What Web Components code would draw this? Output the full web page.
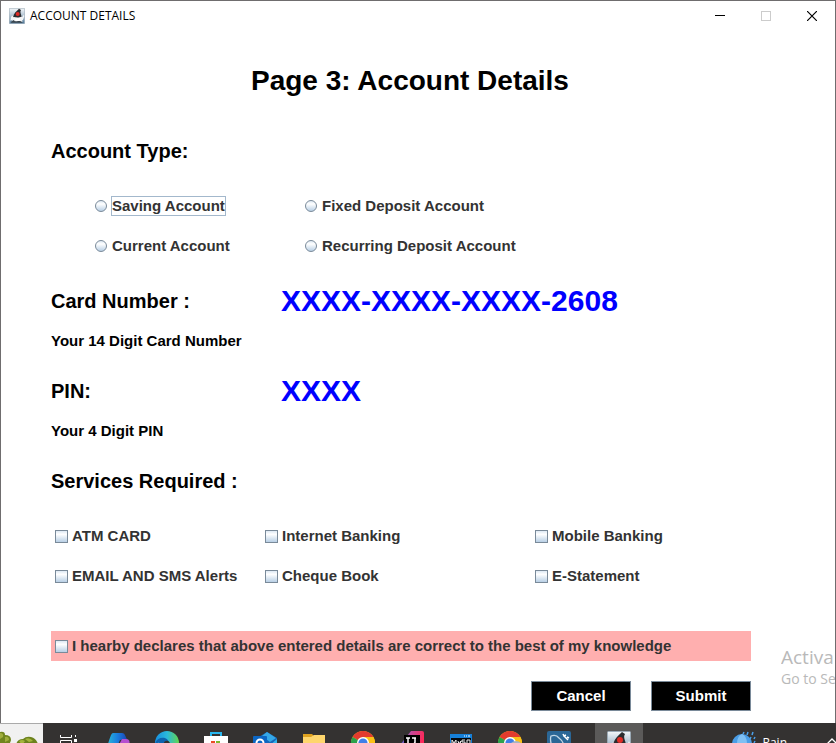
<!DOCTYPE html>
<html lang="en">
<head>
<meta charset="utf-8">
<title>ACCOUNT DETAILS</title>
<style>
  html, body { margin: 0; height: 100%; overflow: hidden; background: #fff; }
  body { font-family: "Liberation Sans", Arial, sans-serif; color: #000; }
</style>
</head>
<body>
<desktop-screen>
  <app-window heading="ACCOUNT DETAILS">
    <account-form></account-form>
  </app-window>
  <activation-note slot="note"></activation-note>
  <task-bar slot="bar"></task-bar>
</desktop-screen>

<script>
const define = (name, html, setup) => {
  const template = document.createElement('template');
  template.innerHTML = html;
  customElements.define(name, class extends HTMLElement {
    connectedCallback() {
      if (this.shadowRoot) return;
      const root = this.attachShadow({ mode: 'open' });
      root.append(template.content.cloneNode(true));
      if (setup) setup(this, root);
    }
  });
};

define('java-icon', `
<style>
  :host { display: block; width: 16px; height: 16px; }
  svg { display: block; width: 100%; height: 100%; }
</style>
<svg viewBox="0 0 24 24" aria-hidden="true">
  <defs><linearGradient id="g" x2="0" y2="1"><stop stop-color="#f4f7f9"/><stop offset=".45" stop-color="#b3c5d4"/><stop offset="1" stop-color="#4f7797"/></linearGradient></defs>
  <rect x=".5" y=".5" width="23" height="23" rx="1" fill="url(#g)" stroke="#9aa9b5"/>
  <path d="M3 13l4-2 2 3-4 4-3 1zM18 11l2 3 2-4 1 2-2 6h-3z" fill="#f4f5f6"/>
  <path d="M7 12l11 1c2 2 2 5 2 8H5c0-4 0-6 2-9z" fill="#f4f5f6"/>
  <path d="M15 1l3 2c-2 3 0 6 1 10-3 0-5 2-8 1-2 0-3-1-5 0 1-6 5-9 9-13z" fill="#2a2c2f"/>
  <circle cx="13" cy="9" r="3" fill="#e02b26"/>
  <path d="M3 21l4-3 2 2 7-1 4 2v1H3z" fill="#39454e"/>
  <path d="M9 16l7-1 1 4-6 1z" fill="#fff"/>
</svg>`);

define('desktop-screen', `
<style>
  :host { display: flex; flex-direction: column; position: relative; height: 100%; overflow: hidden; }
  main { flex: 1 0 auto; display: flex; flex-direction: column; }
</style>
<main><slot></slot></main>
<slot name="bar"></slot>
<slot name="note"></slot>`);

define('app-window', `
<style>
  :host { display: flex; flex-direction: column; flex: 1; background: #fff; border: solid #6f6d6e; border-width: 1px 1px 0; }
  header { display: flex; align-items: center; height: 30px; padding-left: 8px; gap: 5px; }
  h1 { margin: 0; flex: 1; font: 400 12px/16px "Open Sans", "Noto Sans", sans-serif; }
  nav { display: flex; }
  button { all: unset; box-sizing: border-box; display: grid; place-items: center; width: 46px; height: 30px; }
  svg { display: block; width: 10px; height: 10px; fill: none; stroke: #000; }
  .off svg { stroke: #ccc; }
</style>
<header>
  <java-icon></java-icon>
  <h1></h1>
  <nav>
    <button aria-label="Minimize"><svg viewBox="0 0 10 10"><path d="M0 4.500h10"/></svg></button>
    <button class="off" aria-label="Maximize" disabled><svg viewBox="0 0 10 10"><rect x=".5" y=".5" width="9" height="9"/></svg></button>
    <button aria-label="Close"><svg viewBox="0 0 10 10"><path d="M0 0l10 10M10 0L0 10" stroke-width="1.200"/></svg></button>
  </nav>
</header>
<slot></slot>`, (el, root) => {
  root.querySelector('h1').textContent = el.getAttribute('heading');
});

define('detail-row', `
<style>
  :host { display: grid; grid-template-columns: 230px 1fr; align-items: center; }
  h3 { margin: 0; font-size: 20px; line-height: 40px; white-space: nowrap; }
  output { font-weight: 700; font-size: 30px; line-height: 40px; color: #00f; white-space: nowrap; }
  p { grid-column: 1 / -1; margin: 0; font-weight: 700; font-size: 15px; line-height: 40px; }
  p:empty { display: none; }
</style>
<h3 id="label"></h3><output aria-labelledby="label"></output><p></p>`, (el, root) => {
  root.querySelector('h3').textContent = el.getAttribute('label');
  root.querySelector('output').textContent = el.getAttribute('value') || '';
  root.querySelector('p').textContent = el.getAttribute('hint') || '';
});

define('choice-group', `
<style>
  :host { display: block; }
  fieldset { border: 0; margin: 0; padding: 0 0 0 4px; min-width: 0; display: grid; grid-template-columns: var(--columns, 1fr); }
  label { display: flex; align-items: center; gap: 3px; height: var(--row, 40px); font-weight: 700; font-size: 15px; line-height: 18px; color: #333; white-space: nowrap; }
  label:has([type=radio]) { gap: 4px; }
  input { appearance: none; flex: none; box-sizing: border-box; margin: 0; width: 13px; height: 13px; border: 1px solid #7a8a99;
    background: linear-gradient(#dde8f3, #fff 30%, #b8cfe5); outline: none; }
  input[type=radio] { width: 12px; height: 12px; border-radius: 50%; }
  input:checked { box-shadow: inset 0 0 0 3px #e4edf6, inset 0 0 0 6px #333; }
  span { border: 1px solid transparent; }
  .current span, input:focus-visible + span { border-color: #a3b8cc; }
</style>
<fieldset></fieldset>`, (el, root) => {
  const set = root.querySelector('fieldset');
  const kind = el.getAttribute('kind') || 'checkbox';
  set.setAttribute('aria-label', el.getAttribute('label'));
  el.getAttribute('options').split('|').forEach((text, i) => {
    const label = document.createElement('label');
    const input = document.createElement('input');
    const span = document.createElement('span');
    input.type = kind;
    input.name = 'choice';
    input.value = span.textContent = text;
    if (kind === 'radio' && i === 0) label.className = 'current';
    label.append(input, span);
    set.append(label);
  });
});

define('push-button', `
<style>
  :host { display: block; }
  button { box-sizing: border-box; width: 100px; height: 30px; padding: 0; border: 1px solid #7a8a99; border-radius: 0; background: #000; color: #fff; font: 700 15px/18px "Liberation Sans", Arial, sans-serif; }
</style>
<button type="button"><slot></slot></button>`);

define('account-form', `
<style>
  :host { display: block; padding: 30px 84px 12px 50px; }
  h2 { margin: 0 0 30px; padding-left: 200px; font-size: 28px; line-height: 40px; white-space: nowrap; }
  .types { --columns: 210px 1fr; margin: 15px 0 15px 40px; }
  .services { --columns: 210px 270px 1fr; margin: 15px 0 35px; }
  .gap { margin-bottom: 10px; }
  .declare { --row: 30px; background: #ffafaf; }
  footer { display: flex; justify-content: flex-end; gap: 20px; margin-top: 20px; }
</style>
<h2>Page 3: Account Details</h2>
<detail-row label="Account Type:"></detail-row>
<choice-group class="types" kind="radio" label="Account Type" options="Saving Account|Fixed Deposit Account|Current Account|Recurring Deposit Account"></choice-group>
<detail-row class="gap" label="Card Number :" value="XXXX-XXXX-XXXX-2608" hint="Your 14 Digit Card Number"></detail-row>
<detail-row class="gap" label="PIN:" value="XXXX" hint="Your 4 Digit PIN"></detail-row>
<detail-row label="Services Required :"></detail-row>
<choice-group class="services" label="Services Required" options="ATM CARD|Internet Banking|Mobile Banking|EMAIL AND SMS Alerts|Cheque Book|E-Statement"></choice-group>
<choice-group class="declare" label="Declaration" options="I hearby declares that above entered details are correct to the best of my knowledge"></choice-group>
<footer><push-button>Cancel</push-button><push-button>Submit</push-button></footer>`);

define('activation-note', `
<style>
  :host { position: absolute; right: 1px; top: 645px; width: 54px; overflow: hidden; white-space: nowrap; color: #b9b9b9; font-family: "Open Sans", "Noto Sans", sans-serif; }
  p { margin: 0; font-size: 19px; line-height: 24px; }
  small { display: block; font-size: 14px; line-height: 20px; }
</style>
<p>Activa</p><small>Go to Se</small>`);

const chrome = `
  <circle cx="12" cy="12" r="12" fill="#fbc116"/>
  <path d="M12 12L1.600 6A12 12 0 0 1 22.400 6z" fill="#e33b2e"/>
  <path d="M12 12L1.600 6A12 12 0 0 0 12 24z" fill="#2ba24c"/>
  <path d="M12 6h10.400A12 12 0 0 1 12 24z" fill="#fbc116"/>
  <circle cx="12" cy="12" r="6" fill="#fff"/><circle cx="12" cy="12" r="4.600" fill="#3f7fe8"/>`;

define('task-bar', `
<style>
  :host { display: flex; flex: none; height: 40px; margin-bottom: -20px; background: #343231; color: #fff; }
  .scene { width: 43px; background: #f1f1f1; border-top: 1px solid #aaa; box-sizing: border-box; overflow: hidden; margin-right: 1px; }
  .scene svg { display: block; width: 43px; height: 39px; }
  button { all: unset; display: grid; place-items: center; width: 49px; height: 40px; }
  button > svg, button java-icon { display: block; width: 24px; height: 24px; }
  .active { margin-left: 12px; width: 48px; background: #5b5a59; }
  .weather { margin-left: auto; width: auto; display: flex; align-items: center; gap: 7px; font: 400 12px/16px "Open Sans", "Noto Sans", sans-serif; }
  .more { width: 24px; margin-left: 33px; margin-right: -8px; }
  .more svg { width: 10px; height: 10px; }
</style>
<div class="scene"><svg viewBox="0 0 43 39">
  <path d="M0 8q5-1 5 3 6 0 6 5-2 8-11 14z" fill="#70851e"/><path d="M0 9q4 0 3 4l-3 2zM5 13q4-1 4 3l-4 2z" fill="#a0ae3d"/>
  <path d="M16 21q1-6 7-6 3-3 8-2 5 1 7 7 2 6-2 12H18z" fill="#6c821d"/><path d="M19 17q3-2 6 0l-3 4zm6-2q5-2 8 2l-4 1z" fill="#a4b53c"/>
</svg></div>
<button aria-label="Task View"><svg viewBox="0 0 24 24" fill="none" stroke="#fff"><path d="M3.500 4v2.500h11V4M3.500 18V9.500h11V18zM18.500 4v2M18.500 12v8"/><path d="M17 8h3v3h-3z" fill="#fff" stroke="none"/></svg></button>
<button aria-label="Copilot"><svg viewBox="0 0 24 24"><defs><linearGradient id="c"><stop stop-color="#28b7d7"/><stop offset=".5" stop-color="#1a7fe0"/><stop offset="1" stop-color="#1b45b4"/></linearGradient></defs><path d="M7 2h9c3 0 3 3 5 6l-7 1-5 11H3C0 18 2 12 5 4q1-2 2-2z" fill="url(#c)"/><path d="M16 8h4c4 0 4 3 3 7-2 6-3 8-7 8H8z" fill="#b64fd0"/></svg></button>
<button aria-label="Edge"><svg viewBox="0 0 24 24"><defs><linearGradient id="e"><stop stop-color="#168ee0"/><stop offset=".5" stop-color="#2ab9dc"/><stop offset="1" stop-color="#62d64e"/></linearGradient></defs><circle cx="12" cy="12" r="12" fill="url(#e)"/><path d="M0 13c2-8 13-8 14-1 0 2-3 3 0 5-6 4-11-1-10-6-4 3-3 9 1 12A12 12 0 0 1 0 13z" fill="#0e63ae"/><path d="M9 11q4-3 6 1l-2 4-4-1z" fill="#343231"/></svg></button>
<button aria-label="Store"><svg viewBox="0 0 24 24"><path d="M7 6V2h10v4" fill="none" stroke="#28b6ee" stroke-width="2"/><path d="M0 5h24v16q0 2-2 2H2q-2 0-2-2z" fill="#fff"/><path d="M7 10h4v4H7z" fill="#eb4b25"/><path d="M12 10h4v4h-4z" fill="#7cb82f"/><path d="M7 15h4v4H7z" fill="#20a4e8"/><path d="M12 15h4v4h-4z" fill="#fbb716"/></svg></button>
<button aria-label="Outlook"><svg viewBox="0 0 24 24"><path d="M4 7l10-6 10 6v15H4z" fill="#1768b9"/><path d="M9 5l5-4 9 6-6 4z" fill="#35a8e7"/><path d="M24 8v14H8z" fill="#32b4ed"/><rect y="5" width="14" height="14" rx="1" fill="#0c66c3"/><circle cx="7" cy="12" r="3.500" fill="none" stroke="#fff" stroke-width="2"/></svg></button>
<button aria-label="File Explorer"><svg viewBox="0 0 24 24"><path d="M1 3h9l2 2h10v16H1z" fill="#dfa21f"/><path d="M1 6h8l3-2h11v17H1z" fill="#fed66d"/></svg></button>
<button aria-label="Chrome"><svg viewBox="0 0 24 24">${chrome}</svg></button>
<button aria-label="IntelliJ IDEA"><svg viewBox="0 0 24 24"><defs><linearGradient id="i" y2=".3"><stop stop-color="#087cfa"/><stop offset=".45" stop-color="#c44a9b"/><stop offset="1" stop-color="#fe2857"/></linearGradient></defs><path d="M0 14L11 0h11q2 0 2 2v20H3z" fill="url(#i)"/><path d="M4 4h16v16H4z" fill="#000"/><path d="M6 7h4M8 7v6M6 13h4M12 7h4M15 7v4q0 2-3 2" fill="none" stroke="#fff" stroke-width="1.500"/></svg></button>
<button aria-label="MySQL Command Line"><svg viewBox="0 0 24 24"><path d="M1 3h22v19H1z" fill="#1680d8"/><path d="M2 7h20v14H2z" fill="#05080c"/><path d="M15 5h1m1 0h1m1 0h2" stroke="#fff"/><path d="M3 14V9l2 3 2-3v5M9 10l1 3 2-3-2 5M16 9h-3v2h3v3h-3M18 9h3v4h-3zM20 13l2 2" fill="none" stroke="#eee"/></svg></button>
<button aria-label="Chrome, second profile"><svg viewBox="0 0 24 24">${chrome}<circle cx="18" cy="17" r="7" fill="#a7b5c1"/></svg></button>
<button aria-label="MySQL Workbench"><svg viewBox="0 0 24 24"><rect width="24" height="24" rx="2" fill="#2b6796"/><path d="M5 22C6 15 2 10 4 5q5-2 8 2 4 3 5 8l4 4" fill="none" stroke="#c2d7e6" stroke-width="1.300"/><path d="M16 3l1 2 2-1m-2 1l4 4m-1-3l2 1" fill="none" stroke="#fff" stroke-width="1.500"/></svg></button>
<button class="active" aria-label="Account Details"><java-icon></java-icon></button>
<button class="weather"><svg viewBox="0 0 24 24"><path d="M0 13A10 10 0 0 1 20 13q-2-2-5 0-5-2-10 0-3-2-5 0z" fill="#4a9de6"/><path d="M5 13q0-8 5-10 5 2 5 10-5-2-10 0z" fill="#7fc0f3"/><path d="M11 3l1-2M15 4l1-3M20 4l1-3M18 8l1-2M22 8l1-2M22 12l1-2" stroke="#4aa2ed" stroke-width="1.500"/><path d="M10 13v8q0 2 2 2" fill="none" stroke="#ddd"/></svg><span>Rain</span></button>
<button class="more" aria-label="Show hidden icons"><svg viewBox="0 0 10 10" fill="none" stroke="#fff" stroke-width="1.300"><path d="M0 6l5-5 5 5"/></svg></button>`);
</script>
</body>
</html>
